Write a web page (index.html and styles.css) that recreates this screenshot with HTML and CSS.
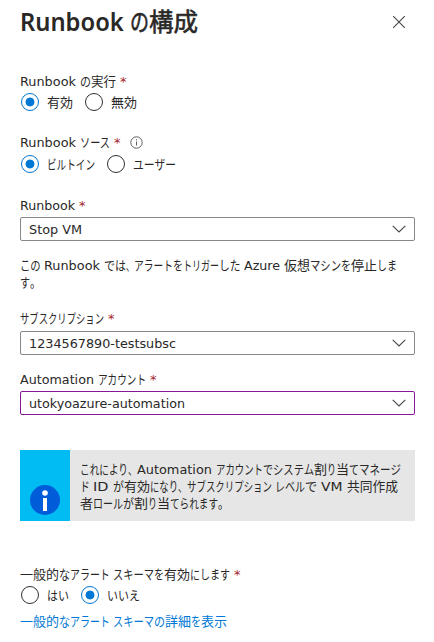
FILE: index.html
```html
<!DOCTYPE html>
<html lang="ja">
<head>
<meta charset="utf-8">
<title>Runbook の構成</title>
<link rel="stylesheet" href="styles.css">
</head>
<body>
<main class="panel">
  <header class="header">
    <h1 class="title"><span data-w="110">Runbook </span><span class="cjk" data-w="19">の</span><span class="cjk" data-w="49">構成</span></h1>
    <svg class="close" width="14" height="14" viewBox="0 0 14 14"><path d="M1.200 1.200l11.600 11.600M12.800 1.200l-11.600 11.600"/></svg>
  </header>

  <section class="field run">
    <div class="line"><span data-w="60">Runbook </span><span data-w="11">の</span><span data-w="25">実行</span><b class="req">*</b></div>
    <div class="radios">
      <i class="radio on"></i><span class="line opt"><span data-w="26">有効</span></span>
      <i class="radio"></i><span class="line opt"><span data-w="26">無効</span></span>
    </div>
  </section>

  <section class="field source">
    <div class="line"><span data-w="60">Runbook </span><span data-w="30">ソース</span><b class="req">*</b><svg class="hint" width="13" height="13" viewBox="0 0 13 13"><circle cx="6.5" cy="6.5" r="5.7"/><path d="M6.5 5.5v4M6.5 3.2v1.2"/></svg></div>
    <div class="radios">
      <i class="radio on"></i><span class="line opt"><span data-w="48">ビルトイン</span></span>
      <i class="radio"></i><span class="line opt"><span data-w="43">ユーザー</span></span>
    </div>
  </section>

  <section class="field book">
    <div class="line"><span data-w="55">Runbook</span><b class="req">*</b></div>
    <div class="select"><span class="line"><span data-w="53">Stop VM</span></span><svg width="14" height="8" viewBox="0 0 14 8"><path d="M.7.8L7 7 13.300 .8"/></svg></div>
  </section>

  <div class="desc">
    <div class="line"><span data-w="24">この </span><span data-w="60">Runbook </span><span data-w="22">では</span><span data-w="8">、</span><span data-w="39">アラート</span><span data-w="10">を</span><span data-w="36">トリガー</span><span data-w="25">した </span><span data-w="40">Azure </span><span data-w="26">仮想</span><span data-w="31">マシン</span><span data-w="10">を</span><span data-w="26">停止</span><span data-w="20">しま</span></div>
    <div class="line"><span data-w="10">す</span><span data-w="11">。</span></div>
  </div>

  <section class="field sub">
    <div class="line"><span data-w="84">サブスクリプション</span><b class="req">*</b></div>
    <div class="select"><span class="line"><span data-w="147">1234567890-testsubsc</span></span><svg width="14" height="8" viewBox="0 0 14 8"><path d="M.7.8L7 7 13.300 .8"/></svg></div>
  </section>

  <section class="field account">
    <div class="line"><span data-w="78">Automation </span><span data-w="48">アカウント</span><b class="req">*</b></div>
    <div class="select active"><span class="line"><span data-w="156">utokyoazure-automation</span></span><svg width="14" height="8" viewBox="0 0 14 8"><path d="M.7.8L7 7 13.300 .8"/></svg></div>
  </section>

  <aside class="info">
    <div class="info-side"><svg width="30" height="30" viewBox="0 0 30 30"><circle cx="15" cy="15" r="15" fill="#015cda"/><circle cx="15" cy="8" r="2.800" fill="#fff"/><path d="M13 13h4v13h-4z" fill="#fff"/></svg></div>
    <div class="info-text">
      <div class="line"><span data-w="48">これにより</span><span data-w="9">、</span><span data-w="79">Automation </span><span data-w="47">アカウント</span><span data-w="10">で</span><span data-w="41">システム</span><span data-w="13">割</span><span data-w="9">り</span><span data-w="13">当</span><span data-w="10">て</span><span data-w="42">マネージ</span></div>
      <div class="line"><span data-w="13">ド </span><span data-w="20">ID </span><span data-w="11">が</span><span data-w="26">有効</span><span data-w="28">になり</span><span data-w="9">、</span><span data-w="88">サブスクリプション </span><span data-w="30">レベル</span><span data-w="16">で </span><span data-w="26">VM </span><span data-w="51">共同作成</span></div>
      <div class="line"><span data-w="13">者</span><span data-w="30">ロール</span><span data-w="11">が</span><span data-w="14">割</span><span data-w="9">り</span><span data-w="13">当</span><span data-w="48">てられます</span><span data-w="11">。</span></div>
    </div>
  </aside>

  <section class="field schema">
    <div class="line"><span data-w="39">一般的</span><span data-w="11">な</span><span data-w="43">アラート </span><span data-w="41">スキーマ</span><span data-w="10">を</span><span data-w="26">有効</span><span data-w="40">にします</span><b class="req">*</b></div>
    <div class="radios">
      <i class="radio"></i><span class="line opt"><span data-w="22">はい</span></span>
      <i class="radio on"></i><span class="line opt"><span data-w="33">いいえ</span></span>
    </div>
    <a class="line link"><span data-w="39">一般的</span><span data-w="11">な</span><span data-w="43">アラート </span><span data-w="41">スキーマ</span><span data-w="11">の</span><span data-w="26">詳細</span><span data-w="10">を</span><span data-w="26">表示</span></a>
  </section>
</main>
<script src="fit.js"></script>
</body>
</html>
```
FILE: styles.css
```css
* { box-sizing: border-box; }
body {
  margin: 0;
  background: #fff;
  color: #292827;
  font: 13px/17px "DejaVu Sans", "Noto Sans CJK JP", sans-serif;
}
.panel { width: 434px; height: 642px; padding: 0 19px 0 20px; overflow: hidden; }
.header { display: flex; justify-content: space-between; align-items: center; height: 44px; padding-right: 9px; }
.title { display: flex; margin: -2px 0 0; font: 600 25px/36px "Noto Sans", "Noto Sans CJK JP", sans-serif; }
.cjk { font-weight: 400; -webkit-text-stroke: .6px currentColor; }
.close { fill: none; stroke: #484644; stroke-width: 1.1; }
.line { display: flex; height: 17px; white-space: pre; }
[data-w] { display: block; flex: none; white-space: pre; transform-origin: 0 50%; }
.req { margin-left: 4px; color: #a4262c; font-weight: 400; }
.run { margin-top: 29px; }
.source { margin-top: 23px; }
.source .radios { margin-top: 4px; }
.book { margin-top: 24px; }
.radios { display: flex; align-items: center; height: 18px; margin-top: 3px; }
.radio { flex: none; width: 18px; height: 18px; border: 1px solid #323130; border-radius: 50%; margin: 0 8px 0 1px; }
.radio.on { border-color: #0078d4; background: radial-gradient(circle, #0078d4 4.100px, transparent 4.800px); }
.opt { margin-right: 11px; }
.hint { margin: 2px 0 0 9px; fill: none; stroke: #605e5c; stroke-width: 1; }
.select { display: flex; align-items: center; justify-content: space-between; height: 24px; margin-top: 3px; padding: 0 8px; border: 1px solid #8a8886; border-radius: 2px; }
.select svg { fill: none; stroke: #484644; stroke-width: 1.1; }
.active { border-color: #881798; }
.desc { margin-top: 16px; }
.sub { margin-top: 19px; }
.sub .select { margin-top: 4px; }
.account { margin-top: 16px; }
.info { display: flex; height: 71px; margin-top: 35px; background: #e6e6e6; }
.info-side { display: flex; align-items: flex-end; justify-content: center; width: 50px; padding-bottom: 6px; background: #00bcf2; }
.info-text { padding: 11px 0 0 10px; }
.schema { margin-top: 45px; }
.link { margin-top: 9px; color: #0078d4; }
```
FILE: fit.js
```js
// Condense each run of text to its advance width.
const runs = [...document.querySelectorAll("[data-w]")];
runs.forEach(el => {
  const target = Number(el.dataset.w);
  const natural = el.getBoundingClientRect().width;
  el.style.width = target + "px";
  el.style.transform = `scaleX(${target / natural})`;
});
```
